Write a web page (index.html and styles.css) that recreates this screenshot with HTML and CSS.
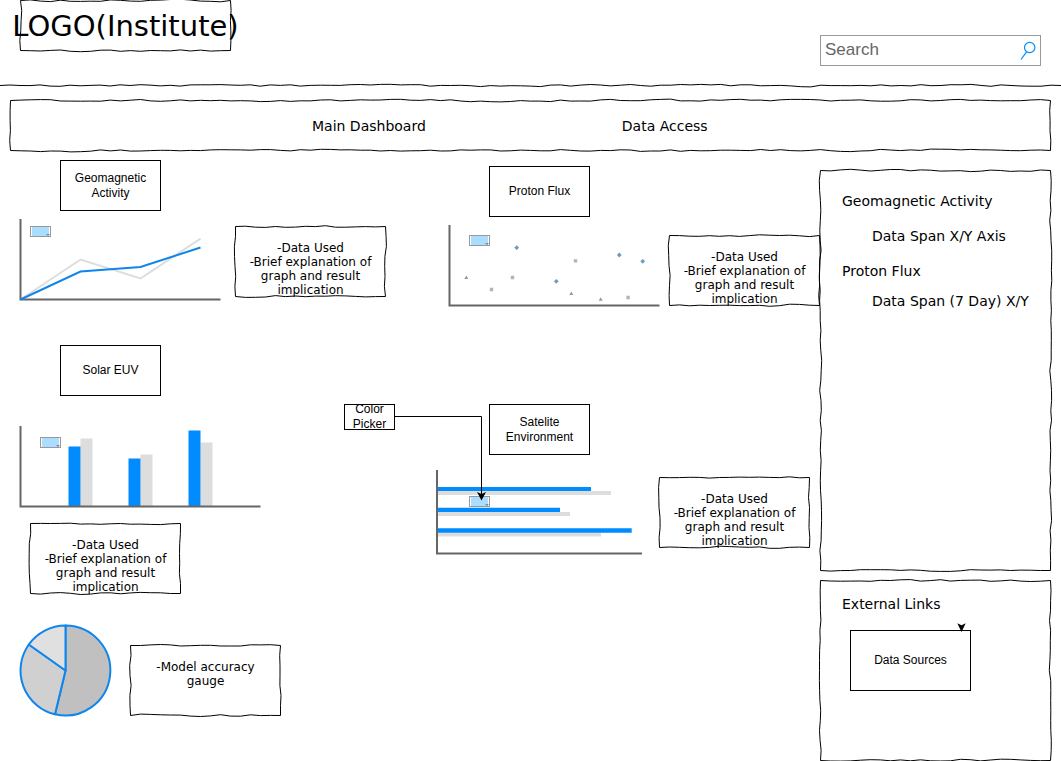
FILE: index.html
```html
<!DOCTYPE html>
<html lang="en">
<head>
<meta charset="utf-8">
<meta name="viewport" content="width=device-width, initial-scale=1">
<title>Main Dashboard</title>
<link rel="stylesheet" href="styles.css">
<script src="sketch.js" defer></script>
</head>
<body>
<header class="header">
  <h1 class="logo sketch">LOGO(Institute)</h1>
  <form class="search" role="search">
    <input class="search-input" type="search" aria-label="Search" placeholder="Search">
    <button class="search-button" type="submit" aria-label="Submit search">
      <svg width="16" height="20" viewBox="0 0 16 20" fill="none" stroke="#008cff" stroke-width="1.2"><circle cx="9.7" cy="6.500" r="5.200"/><path d="M6.700 10.700 1 18.500"/></svg>
    </button>
  </form>
</header>
<div class="divider sketch-line"></div>
<nav class="nav sketch">
  <a href="#main">Main Dashboard</a>
  <a href="#data">Data Access</a>
</nav>
<div class="page">
  <main class="content" id="main">
    <div class="column">
      <section class="widget">
        <h2 class="box title">Geomagnetic Activity</h2>
        <div class="row">
          <div class="chart">
            <svg width="201" height="81" viewBox="0 0 201 81" fill="none" stroke-width="2">
              <path stroke="#ddd" d="M.5 80.5 60.5 40.5 120.5 59.5 180.5 19.7"/>
              <path stroke="#666" d="M.5 0V80.5H200.5"/>
              <path stroke="#1085ec" d="M.5 80.5 60.5 52.5 120.5 48 180.5 28.5"/>
            </svg>
            <label class="picker picker-line"><input type="color" value="#aaddff" aria-label="Geomagnetic colour"></label>
          </div>
          <p class="note sketch">-Data Used<br>-Brief explanation of<br>graph and result<br>implication</p>
        </div>
      </section>
      <section class="widget solar">
        <h2 class="box title">Solar EUV</h2>
        <div class="chart">
          <svg width="241" height="82" viewBox="0 0 241 82">
            <path fill="#ddd" d="M60.5 12.5h12v68h-12zM120.5 28.5h12v52h-12zM180.5 16.5h12v64h-12z"/>
            <path fill="#008cff" d="M48.5 20.5h12v60h-12zM108.5 32.5h12v48h-12zM168.5 4.5h12v76h-12z"/>
            <path fill="none" stroke="#666" stroke-width="2" d="M.5 0V80.5H240.5"/>
          </svg>
          <label class="picker picker-bars"><input type="color" value="#aaddff" aria-label="Solar EUV colour"></label>
        </div>
        <p class="note sketch">-Data Used<br>-Brief explanation of<br>graph and result<br>implication</p>
      </section>
      <section class="gauge">
        <svg width="93" height="93" viewBox="0 0 93 93" stroke="#1085ec" stroke-width="2" stroke-linejoin="round">
          <path fill="#c0c0c0" d="M46.5 46.5V1.5A45 45 0 1 1 36 90.3Z"/>
          <path fill="#d0d0d0" d="M46.5 46.5 36 90.3A45 45 0 0 1 9.8 20.5Z"/>
          <path fill="#e0e0e0" d="M46.5 46.5 9.8 20.5A45 45 0 0 1 46.5 1.5Z"/>
        </svg>
        <p class="note sketch">-Model accuracy<br>gauge</p>
      </section>
    </div>
    <div class="column column-right">
      <section class="widget">
        <h2 class="box title">Proton Flux</h2>
        <div class="row">
          <div class="chart">
            <svg width="211" height="81" viewBox="0 0 211 81">
              <path fill="none" stroke="#666" stroke-width="2" d="M.5 0V80.5H210.5"/>
              <path fill="#6c9cc0" d="m67.7 20.3 2.400 2.400-2.400 2.400-2.400-2.400zM170.3 27.6l2.400 2.400-2.400 2.400-2.400-2.400zM193.7 33.900l2.400 2.400-2.400 2.400-2.400-2.400zM107.3 53.900l2.400 2.400-2.400 2.400-2.400-2.400z"/>
              <path fill="#b3b3b8" d="M124.8 34.2h3.4v3.4h-3.4zM61.8 50.8h3.4v3.4h-3.4zM40.8 62.8h3.4v3.4h-3.4zM177.4 70.8h3.4v3.4h-3.4z"/>
              <path fill="#999" d="m17.3 50.4 2 3.6h-4zM122.3 66.4l2 3.6h-4zM151.7 72.2l2 3.6h-4z"/>
            </svg>
            <label class="picker picker-scatter"><input type="color" value="#aaddff" aria-label="Proton flux colour"></label>
          </div>
          <p class="note sketch">-Data Used<br>-Brief explanation of<br>graph and result<br>implication</p>
        </div>
      </section>
      <section class="widget satellite">
        <h2 class="box title">Satelite Environment</h2>
        <div class="row">
          <div class="chart">
            <svg width="205" height="85" viewBox="0 0 205 85">
              <path fill="#ddd" d="M0 21h174v4H0zM0 42h133v4H0zM0 62.5h164v4H0z"/>
              <path fill="#008cff" d="M0 17h154v4H0zM0 37.7h123v4.3H0zM0 58.3h194.7v4.5H0z"/>
              <path fill="none" stroke="#666" stroke-width="2" d="M0 0V83.5H205"/>
            </svg>
            <label class="picker picker-hbars"><input type="color" value="#aaddff" aria-label="Satelite colour"></label>
          </div>
          <p class="note sketch">-Data Used<br>-Brief explanation of<br>graph and result<br>implication</p>
        </div>
        <div class="callout">
          <span class="box callout-label">Color Picker</span>
          <svg width="92" height="98" viewBox="0 0 92 98"><path fill="none" stroke="#000" d="M0 12.5H86.5V90"/><path d="m86.5 96.500-4.500-8.500 4.500 2 4.500-2z"/></svg>
        </div>
      </section>
    </div>
  </main>
  <aside class="sidebar" id="data">
    <section class="panel panel-data sketch">
      <h3>Geomagnetic Activity</h3>
      <p>Data Span X/Y Axis</p>
      <h3>Proton Flux</h3>
      <p>Data Span (7 Day) X/Y</p>
    </section>
    <section class="panel panel-links sketch">
      <h3>External Links</h3>
      <a class="box source" href="#sources">Data Sources
        <svg class="source-arrow" width="9" height="9" viewBox="0 0 9 9"><path d="M4.5 9 .3.3l4.200 2 4.200-2z"/></svg>
      </a>
    </section>
  </aside>
</div>
</body>
</html>
```
FILE: styles.css
```css
* {
  box-sizing: border-box;
}

body {
  margin: 0;
  background: #fff;
  color: #000;
  font-family: Verdana, "DejaVu Sans", sans-serif;
  font-size: 14px;
  line-height: 20px;
}

h1,
h2,
h3,
p {
  margin: 0;
  font-weight: 400;
}

a {
  color: inherit;
  text-decoration: none;
}

svg {
  display: block;
  flex: none;
  overflow: visible;
}

/* Hand-drawn outlines */
.sketch,
.sketch-line {
  position: relative;
}

.outline {
  position: absolute;
  top: 0;
  left: 0;
  fill: none;
  stroke: #000;
  pointer-events: none;
}

.header {
  display: flex;
  justify-content: space-between;
  align-items: flex-start;
  min-height: 85px;
  padding: 0 20px;
}

.logo {
  display: flex;
  justify-content: center;
  align-items: center;
  width: 211px;
  height: 51px;
  font-size: 29px;
  white-space: nowrap;
}

.search {
  display: flex;
  align-items: center;
  width: 221px;
  height: 31px;
  margin-top: 35px;
  border: 1px solid #999;
}

.search-input {
  flex: 1;
  min-width: 0;
  padding: 0 0 2px 4px;
  border: 0;
  background: none;
  color: #666;
  font: 17px "Liberation Sans", Arial, sans-serif;
}

.search-input::placeholder {
  color: #666;
}

.search-button {
  padding: 0 4px 0 0;
  border: 0;
  background: none;
}

.divider {
  height: 2px;
}

.nav {
  display: flex;
  align-items: center;
  gap: 196px;
  height: 51px;
  margin: 13px 10px 0;
  padding-left: 302px;
}

.page {
  display: flex;
  align-items: flex-start;
  padding-right: 10px;
  overflow: clip;
}

.content {
  display: grid;
  flex: 1;
  grid-template-columns: 43fr 39fr;
}

.column {
  padding: 9px 0 0 20px;
}

.column-right {
  padding: 15px 0 0 21px;
}

.box {
  display: flex;
  justify-content: center;
  align-items: center;
  border: 1px solid #000;
  font: 12px/15px "Liberation Sans", Arial, sans-serif;
  text-align: center;
}

.title {
  width: 101px;
  height: 51px;
  margin: 0 0 8px 40px;
  padding: 0 10px;
}

.row {
  display: flex;
  align-items: flex-start;
  gap: 14px;
}

.chart {
  position: relative;
  flex: none;
}

.note {
  flex: none;
  width: 151px;
  height: 71px;
  margin-top: 7px;
  padding-top: 15px;
  font-size: 12px;
  line-height: 14px;
  text-align: center;
  white-space: nowrap;
}

.picker {
  position: absolute;
  width: 21px;
  height: 11px;
  padding: 0 1px;
  border: 1px solid #999;
  background: #fff;
}

.picker::after {
  content: "";
  position: absolute;
  right: 0;
  bottom: 0;
  border: 2px solid transparent;
  border-top-color: #888;
  border-bottom: 0;
}

.picker input {
  display: block;
  width: 100%;
  height: 100%;
  padding: 0;
  border: 0;
  appearance: none;
  background: none;
}

.picker input::-webkit-color-swatch-wrapper {
  padding: 0;
}

.picker input::-webkit-color-swatch {
  border: 0;
}

.picker-line {
  top: 7px;
  left: 10px;
}

.picker-bars {
  top: 11px;
  left: 20px;
}

.picker-scatter {
  top: 10px;
  left: 20px;
}

.picker-hbars {
  top: 26px;
  left: 32px;
}

.solar {
  margin-top: 45px;
}

.solar .title {
  margin-bottom: 30px;
}

.solar .note {
  margin: 15px 0 0 10px;
}

.gauge {
  display: flex;
  align-items: center;
  gap: 18px;
  margin: 30px 0 0 -1px;
}

.gauge .note {
  margin-top: 20px;
}

.column-right .row {
  gap: 9px;
}

.column-right .note {
  margin-top: 10px;
}

.satellite {
  position: relative;
  margin-top: 98px;
}

.satellite .title {
  margin-bottom: 15px;
}

.column-right .satellite .row {
  gap: 17px;
  margin-left: -12px;
}

.column-right .satellite .note {
  margin-top: 7px;
}

/* Annotation pointing into the chart from the neighbouring column */
.callout {
  position: absolute;
  top: 0;
  left: -105px;
  display: flex;
  align-items: flex-start;
}

.callout-label {
  width: 51px;
  height: 26px;
}

.sidebar {
  display: flex;
  flex-direction: column;
  flex: none;
  gap: 9px;
  width: 231px;
  padding-top: 19px;
}

.panel {
  padding: 21px 0 0 22px;
  white-space: nowrap;
}

.panel h3 {
  font-size: 14px;
}

.panel-data {
  min-height: 401px;
}

.panel-data h3 + p {
  margin: 15px 0 15px 30px;
}

.panel-data h3 ~ h3 + p {
  margin-top: 10px;
}

.panel-links {
  min-height: 181px;
  padding-top: 14px;
}

.source {
  position: relative;
  width: 121px;
  height: 61px;
  margin: 16px 0 0 8px;
}

.source-arrow {
  position: absolute;
  top: -8px;
  right: 4px;
}
```
FILE: sketch.js
```js
// Draws wavering pen outlines around .sketch boxes and along .sketch-line rules.
const NS = "http://www.w3.org/2000/svg";
const STEP = 10;

function makeRandom(seed) {
  let s = seed;
  return () => {
    s = (s * 16807) % 2147483647;
    return s / 2147483647;
  };
}

function stroke(x1, y1, x2, y2, random) {
  const length = Math.hypot(x2 - x1, y2 - y1);
  const nx = (y1 - y2) / length;
  const ny = (x2 - x1) / length;
  const count = Math.max(1, Math.round(length / STEP));
  let d = "";
  let off = 0;
  for (let i = 1; i <= count; i++) {
    const t = i / count;
    off = i === count ? 0 : off * 0.4 + (random() - 0.5) * 2;
    d += `L${(x1 + (x2 - x1) * t + nx * off).toFixed(1)} ${(y1 + (y2 - y1) * t + ny * off).toFixed(1)}`;
  }
  return d;
}

function draw(el, index) {
  el.querySelector(":scope > .outline")?.remove();
  const w = el.offsetWidth;
  const h = el.offsetHeight;
  const random = makeRandom(7919 * (index + 3));
  const svg = document.createElementNS(NS, "svg");
  svg.setAttribute("class", "outline");
  svg.setAttribute("width", w);
  svg.setAttribute("height", h);
  svg.setAttribute("aria-hidden", "true");
  const path = document.createElementNS(NS, "path");
  const r = w - 0.5;
  const b = h - 0.5;
  path.setAttribute("d", el.classList.contains("sketch-line")
    ? "M0 0.5" + stroke(0, 0.5, w, 0.5, random)
    : "M0.5 0.5" + stroke(0.5, 0.5, r, 0.5, random) + stroke(r, 0.5, r, b, random) +
      stroke(r, b, 0.5, b, random) + stroke(0.5, b, 0.5, 0.5, random) + "Z");
  svg.append(path);
  el.append(svg);
}

function drawAll() {
  document.querySelectorAll(".sketch, .sketch-line").forEach(draw);
}

drawAll();
window.addEventListener("resize", drawAll);
```
